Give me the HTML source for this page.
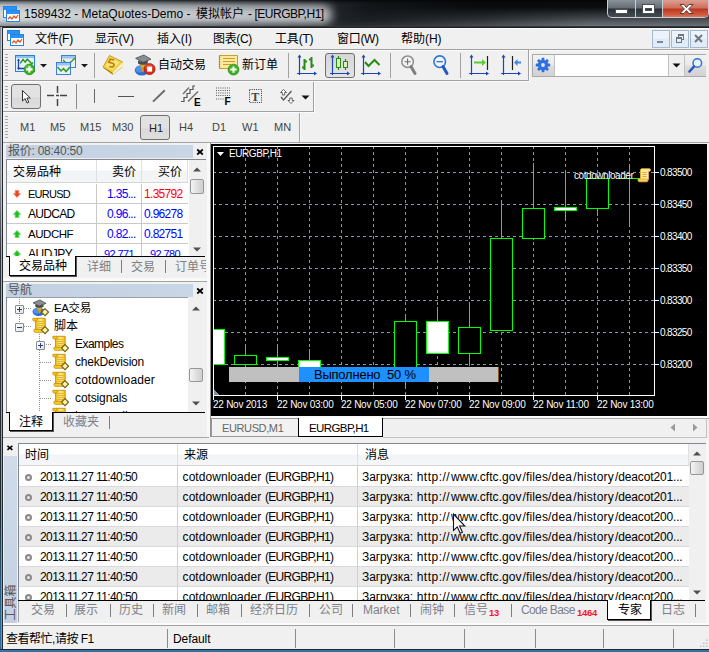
<!DOCTYPE html>
<html lang="zh"><head>
<meta charset="utf-8">
<title>1589432 - MetaQuotes-Demo</title>
<style>
html,body{margin:0;padding:0;}
body{width:709px;height:652px;overflow:hidden;position:relative;background:#f0f0f0;
 font-family:"Liberation Sans","Noto Sans CJK SC",sans-serif;font-size:12px;color:#000;}
.a{position:absolute;}
.t{position:absolute;white-space:nowrap;line-height:16px;height:16px;}
.cj{font-family:"Liberation Sans","Noto Sans CJK SC",sans-serif;}
/* title bar */
#title{left:0;top:0;width:709px;height:28px;background:linear-gradient(90deg,#8e959c 0px,#767d85 60px,#50575e 180px,#2c3137 300px,#12161a 370px,#080a0c 480px,#0b0d10 709px);}
#titleshade{left:0;top:0;width:709px;height:27px;background:linear-gradient(180deg,rgba(0,0,0,.7) 0px,rgba(0,0,0,.25) 2px,rgba(0,0,0,0) 5px,rgba(0,0,0,0) 20px,rgba(60,66,72,.35) 27px);}
#menubar{left:3px;top:29px;width:706px;height:20px;background:#f0f0f0;}
.menu{top:31px;font-size:12px;}
.tb{background:#f0f0f0;}
.sep{position:absolute;width:1px;background:#a0a0a0;}
.grip{position:absolute;margin-left:-4px;width:3px;background-image:repeating-linear-gradient(180deg,#a8a8a8 0,#a8a8a8 1px,transparent 1px,transparent 3px);}
.tf{top:119px;font-size:11px;color:#444;}
.phead{background:linear-gradient(90deg,#c2d0e1,#c9d6e6);}
.ptitle{font-size:12px;color:#555;}
.x{font-weight:bold;font-size:11px;color:#000;}
.cell{font-size:12px;}
.blue{color:#0000ff;}
.red{color:#ff0000;}
.tabtxt{color:#7c8088;font-size:12px;}
.row{position:absolute;left:19px;width:669px;height:19px;border-bottom:1px solid #dadada;}
.row.g{background:#ebebeb;}
.rt{position:absolute;top:2px;white-space:nowrap;line-height:16px;font-size:12px;}
</style>
</head>
<body>
<svg width="0" height="0" style="position:absolute"><defs><linearGradient id="sg" x1="0" x2="1" y1="0" y2="0"><stop offset="0" stop-color="#f3bb10"></stop><stop offset=".5" stop-color="#fdec94"></stop><stop offset="1" stop-color="#f3bb10"></stop></linearGradient></defs></svg>
<!-- ===== window frame ===== -->
<div class="a" id="title"></div>
<div class="a" style="left:-20px;top:5px;width:352px;height:20px;background:#f0f3f6;opacity:.74;filter:blur(5px);border-radius:9px;"></div>
<div class="a" id="titleshade"></div>
<div class="a" style="left:330px;top:0;width:379px;height:27px;background:linear-gradient(180deg,rgba(0,0,0,0) 0,rgba(0,0,0,0) 7px,rgba(112,120,126,.92) 26px);-webkit-mask-image:linear-gradient(90deg,transparent 0,#000 260px);mask-image:linear-gradient(90deg,transparent 0,#000 260px);"></div>
<div class="a" style="left:0;top:26px;width:709px;height:2px;background:linear-gradient(180deg,#3a3f44,#15181b);"></div>
<div class="a" style="left:3px;top:28px;width:706px;height:1px;background:#fafafa;"></div>
<div class="a" style="left:0;top:27px;width:1px;height:625px;background:linear-gradient(180deg,#8a9099 0,#8a9099 150px,#2d343b 230px,#1e2932 480px,#2a5f8a 560px,#2c6e9e 625px);"></div><div class="a" style="left:1px;top:27px;width:1px;height:625px;background:linear-gradient(180deg,#c4c9ce 0,#c0c6cc 150px,#a4adb6 230px,#8d9aa8 480px,#6d9cc0 560px,#5f9ccb 625px);"></div><div class="a" style="left:2px;top:27px;width:1px;height:625px;background:#23272b;"></div>
<div class="a" style="left:0;top:649px;width:709px;height:3px;background:linear-gradient(180deg,#1d2a36 0,#1d2a36 1px,#3a7aa8 1px,#2d6c9c 3px);"></div>
<div class="a" style="left:3px;top:648px;width:706px;height:1px;background:#f0f0f0;"></div>

<!-- title text -->
<div class="t" style="left: 24px; top: 6px; font-size: 12px; color: rgb(0, 0, 0); letter-spacing: 0.02px;">1589432 - MetaQuotes-Demo -</div><div class="t" style="left:196px;top:6px;font-size:12px;color:#000;">模拟帐户</div><div class="t" style="left: 248px; top: 6px; font-size: 12px; color: rgb(0, 0, 0); letter-spacing: -0.47px;">- [EURGBP,H1]</div>

<!-- app icon in title -->
<svg class="a" style="left:3px;top:6px" width="18" height="17" viewBox="0 0 18 17">
 <rect x="0.5" y="0.5" width="13" height="11" fill="#fff" stroke="#1e86ea"></rect><rect x="1" y="1" width="12" height="3" fill="#2b92f5"></rect>
 <rect x="3.5" y="4.5" width="13" height="11" fill="#fff" stroke="#1e86ea"></rect><rect x="4" y="5" width="12" height="3" fill="#2b92f5"></rect>
 <polyline points="5,13 7,11 9,13 11,10 13,12 15,9" fill="none" stroke="#e8501c" stroke-width="1.3"></polyline>
</svg>
<!-- window buttons -->
<div class="a" style="left:607px;top:0;width:102px;height:18px;border-radius:0 0 5px 5px;border:1px solid #c9ced4;border-top:none;box-sizing:border-box;background:linear-gradient(180deg,#8a9299 0,#646c74 8px,#2a3036 9px,#454d55 17px);overflow:hidden;">
 <div class="a" style="left:27px;top:0;width:1px;height:18px;background:#c9ced4;"></div>
 <div class="a" style="left:54px;top:0;width:1px;height:18px;background:#c9ced4;"></div>
 <div class="a" style="left:55px;top:0;width:47px;height:18px;background:linear-gradient(180deg,#dc9f92 0,#cf6f5c 8px,#bc3820 9px,#d0563c 14px,#d8765c 17px);"></div>
 <div class="a" style="left:8px;top:10px;width:11px;height:3px;background:#fff;box-shadow:0 0 0 1px #4a4f55;"></div>
 <div class="a" style="left:35px;top:5px;width:7px;height:3px;border:2px solid #fff;border-top-width:3px;box-shadow:0 0 0 1px #4a4f55,inset 0 0 0 1px #4a4f55;"></div>
 <svg class="a" style="left:70px;top:3px" width="17" height="12" viewBox="0 0 17 12"><path d="M2 1.500h4l2.500 3 2.500-3h4l-4.400 4.500 4.400 4.500h-4l-2.500-3-2.500 3h-4l4.400-4.500z" fill="#fff" stroke="#5a3a36" stroke-width="1"></path></svg>
</div>
<div class="a" id="menubar"></div>
<div class="a" style="left:3px;top:49px;width:706px;height:1px;background:#a2a2a2;"></div><div class="a" style="left:3px;top:50px;width:706px;height:1px;background:#fbfbfb;"></div>
<svg class="a" style="left:7px;top:29px" width="18" height="18" viewBox="0 0 18 18">
 <rect x="0.5" y="1.5" width="12" height="10" fill="#fff" stroke="#1e86ea"></rect><rect x="1" y="2" width="11" height="3" fill="#2b92f5"></rect>
 <rect x="3.5" y="5.5" width="13" height="11" fill="#fff" stroke="#1e86ea"></rect><rect x="4" y="6" width="12" height="3" fill="#2b92f5"></rect>
 <polyline points="5,14 7,12 9,14 11,11 13,13 15,10" fill="none" stroke="#e8501c" stroke-width="1.3"></polyline>
</svg>
<div class="t menu" style="left: 35px; letter-spacing: -0.3px;">文件(F)</div>
<div class="t menu" style="left: 95px; letter-spacing: -0.22px;">显示(V)</div>
<div class="t menu" style="left: 157px; letter-spacing: -0.07px;">插入(I)</div>
<div class="t menu" style="left: 213px; letter-spacing: -0.37px;">图表(C)</div>
<div class="t menu" style="left: 275px; letter-spacing: -0.18px;">工具(T)</div>
<div class="t menu" style="left: 337px; letter-spacing: -0.3px;">窗口(W)</div>
<div class="t menu" style="left: 401px; letter-spacing: -0.04px;">帮助(H)</div>
<!-- mdi buttons -->
<div class="a" style="left:652px;top:30px;width:18px;height:18px;box-sizing:border-box;border:1px solid #a4b8d0;background:linear-gradient(180deg,#edf3fb 0,#edf3fb 7px,#dfeaf7 8px,#e3edf8 16px);"><div class="a" style="left:4px;top:10px;width:6px;height:2px;background:#7d8794;"></div></div>
<div class="a" style="left:671px;top:30px;width:18px;height:18px;box-sizing:border-box;border:1px solid #a4b8d0;background:linear-gradient(180deg,#edf3fb 0,#edf3fb 7px,#dfeaf7 8px,#e3edf8 16px);">
 <div class="a" style="left:6px;top:3px;width:4px;height:3px;border:1px solid #6d7783;border-top-width:2px;"></div>
 <div class="a" style="left:4px;top:6px;width:4px;height:3px;border:1px solid #6d7783;border-top-width:2px;background:#e3eefa;"></div></div>
<div class="a" style="left:690px;top:30px;width:18px;height:18px;box-sizing:border-box;border:1px solid #a4b8d0;background:linear-gradient(180deg,#edf3fb 0,#edf3fb 7px,#dfeaf7 8px,#e3edf8 16px);">
 <svg class="a" style="left:3px;top:3px" width="9" height="9" viewBox="0 0 9 9"><path d="M1 1L8 8M8 1L1 8" stroke="#6d7783" stroke-width="2"></path></svg></div>

<!-- toolbar 1 -->
<div class="a" style="left:3px;top:50px;width:526px;height:31px;border-right:1px solid #a2a2a2;border-bottom:1px solid #a2a2a2;box-sizing:border-box;box-shadow:1px 1px 0 #fbfbfb;"></div>
<div class="grip" style="left:9px;top:54px;height:22px;"></div>
<!-- new chart -->
<svg class="a" style="left:14px;top:54px" width="36" height="22" viewBox="0 0 36 22">
 <rect x="1.500" y="1.500" width="19" height="16" fill="#e6f0fb" stroke="#2b7fe0"></rect><rect x="2" y="2" width="18" height="2" fill="#8fc0f4"></rect>
 <path d="M4.500 5.500v9.500M4 14.500h8" stroke="#1846b8" stroke-width="1.300" fill="none"></path><path d="M4.500 4.500l-1.600 2.200h3.200zM4.500 16l-1.600-2.200h3.200z" fill="#1846b8"></path>
 <polyline points="6.200,9.400 9,5.500 11.200,8 13.300,5.200 17.900,9.800 18.900,8.300" fill="none" stroke="#2f9a1a" stroke-width="1.500"></polyline>
 <circle cx="15.400" cy="15.400" r="5.300" fill="#38b020" stroke="#2a9412" stroke-width=".8"></circle>
 <circle cx="14.600" cy="14.200" r="3.200" fill="#6fd24e" opacity=".55"></circle>
 <path d="M15.400 12.200v6.400M12.200 15.400h6.400" stroke="#fff" stroke-width="2.100"></path>
 <path d="M26 10h7l-3.500 3.600z" fill="#1a1a1a"></path>
</svg>
<!-- profiles -->
<svg class="a" style="left:55px;top:54px" width="36" height="22" viewBox="0 0 36 22">
 <rect x="6.5" y="1.5" width="14" height="12" fill="#e8f1fb" stroke="#3c7fd6"></rect><rect x="7" y="2" width="13" height="2.5" fill="#9cc4f0"></rect>
 <polyline points="8,6 12,10 16,8 20,4" fill="none" stroke="#2f9a1a" stroke-width="1.4"></polyline>
 <rect x="1.5" y="8.5" width="14" height="12" fill="#e8f1fb" stroke="#3c7fd6"></rect><rect x="2" y="9" width="13" height="2.5" fill="#9cc4f0"></rect>
 <polyline points="2.5,13 6,17 8.5,14.5 11,17.5 15,13" fill="none" stroke="#2f9a1a" stroke-width="1.5"></polyline>
 <path d="M26 10h7l-3.5 3.6z" fill="#1a1a1a"></path>
</svg>
<div class="sep" style="left:94px;top:53px;height:25px;"></div>
<!-- market watch book -->
<svg class="a" style="left:102px;top:54px" width="22" height="22" viewBox="0 0 22 22">
 <path d="M1 13L7.500 1.500L20.800 8L20.300 13.400L10.700 20.800L1.500 13.900z" fill="#caa01e"></path>
 <path d="M1 13L7.500 1.500L20.800 8L13.500 15.500L10.300 18.500z" fill="#f2cf3e"></path>
 <path d="M3.200 12.300L8.200 3.600L17.800 8.300L10.300 15.900z" fill="#f9e478"></path>
 <path d="M13.500 15.500L20.800 8L20.500 12.800L11 20.300L10.300 18.500z" fill="#fbf4d2"></path>
 <path d="M1 13L10.300 18.500L11 20.600L1.500 14z" fill="#a8820e"></path>
 <path d="M12.200 6L8.200 5.200L6.800 8.200l4.300 1.300c1.500.8 1.300 3-.6 3.500l-3.200-.4" fill="none" stroke="#c07c10" stroke-width="1.700"></path>
 <path d="M1 13L7.500 1.500L20.800 8" fill="none" stroke="#b8921a" stroke-width=".7"></path>
</svg>
<!-- auto trading -->
<svg class="a" style="left:133px;top:53px" width="24" height="23" viewBox="0 0 24 23">
 <ellipse cx="8.800" cy="17.300" rx="7" ry="5.200" fill="#2a6ad6"></ellipse>
 <ellipse cx="6.400" cy="16.200" rx="3.600" ry="3.400" fill="#5c9af2" opacity=".8"></ellipse>
 <path d="M7 11h6l-1.500 6.500L9.500 20z" fill="#c89a20"></path>
 <ellipse cx="10" cy="10.800" rx="3.400" ry="3.600" fill="#d8aa30"></ellipse>
 <path d="M5 7.500v3c2.400 1.700 7.400 1.700 9.800 0v-3l-4.900 2z" fill="#4a4d51"></path>
 <path d="M2.600 5.300L10.900 2L18 6.200L10 9.400z" fill="#8a8d91" stroke="#3a3c3f" stroke-width=".7"></path>
 <circle cx="16.600" cy="16.100" r="5.500" fill="#d82c1a" stroke="#b01c0e" stroke-width=".8"></circle>
 <ellipse cx="16" cy="14" rx="3.800" ry="2.600" fill="#f06a50" opacity=".55"></ellipse>
 <rect x="14.100" y="13.600" width="5" height="5" fill="#fff"></rect>
</svg>
<div class="t" style="left:158px;top:57px;">自动交易</div>
<!-- new order -->
<svg class="a" style="left:217px;top:54px" width="24" height="22" viewBox="0 0 24 22">
 <rect x="2.5" y="1.5" width="18" height="13" fill="#fbe9a0" stroke="#c9a020"></rect>
 <path d="M2.5 2.5v11" stroke="#a88414" stroke-width="1.4" stroke-dasharray="1.2 1.2"></path>
 <path d="M6 4.5h12M6 7.5h12M6 10.5h8" stroke="#c9a020" stroke-width="1.2"></path>
 <circle cx="16.5" cy="15.6" r="5.4" fill="#3db324" stroke="#2a8f15" stroke-width=".8"></circle>
 <path d="M16.5 12.4v6.4M13.3 15.6h6.4" stroke="#fff" stroke-width="2"></path>
</svg>
<div class="t" style="left:242px;top:57px;">新订单</div>
<div class="sep" style="left:288px;top:53px;height:25px;"></div>
<!-- bars -->
<svg class="a" style="left:295px;top:54px" width="24" height="22" viewBox="0 0 24 22">
 <path d="M4.5 2v19M2 19.5h19" stroke="#1846b8" stroke-width="1.2" fill="none"></path><path d="M4.5 0.5l-2 3h4zM22 19.5l-3-2v4z" fill="#1846b8"></path>
 <path d="M9.5 5v11M7 13.5h2.5M9.5 7.5H12M16.500 3v11M14 5.500h2.500M16.500 11.500H19" stroke="#2a8a12" stroke-width="2" fill="none"></path>
</svg>
<!-- candles pressed -->
<div class="a" style="left:325px;top:53px;width:30px;height:25px;box-sizing:border-box;border:1px solid #6f6f6f;border-radius:3px;background:linear-gradient(180deg,#d6d6d6,#e3e3e3);"></div>
<svg class="a" style="left:328px;top:54px" width="24" height="22" viewBox="0 0 24 22">
 <path d="M4.5 2v19M2 19.5h19" stroke="#1846b8" stroke-width="1.2" fill="none"></path><path d="M4.5 0.5l-2 3h4zM22 19.500l-3-2v4z" fill="#1846b8"></path>
 <path d="M10.500 2v14M17.500 5v11" stroke="#2a8a12" stroke-width="1.2"></path>
 <rect x="8.500" y="4.500" width="4" height="9" fill="#d8f3c8" stroke="#2a8a12"></rect><rect x="15.500" y="7.500" width="4" height="6" fill="#d8f3c8" stroke="#2a8a12"></rect>
</svg>
<!-- line -->
<svg class="a" style="left:359px;top:54px" width="24" height="22" viewBox="0 0 24 22">
 <path d="M4.500 2v19M2 19.500h19" stroke="#1846b8" stroke-width="1.2" fill="none"></path><path d="M4.500 0.500l-2 3h4zM22 19.500l-3-2v4z" fill="#1846b8"></path>
 <polyline points="6,8 9.500,12 15.500,6 20.500,11" fill="none" stroke="#2a8a12" stroke-width="2"></polyline>
</svg>
<div class="sep" style="left:390px;top:53px;height:25px;"></div>
<!-- zoom in -->
<svg class="a" style="left:397px;top:53px" width="24" height="24" viewBox="0 0 24 24">
 <circle cx="10.600" cy="8.700" r="5.800" fill="#f4f4f4" stroke="#8c8c8c" stroke-width="1.500"></circle>
 <path d="M7.500 8.700h6.200M10.600 5.600v6.200" stroke="#6e6e6e" stroke-width="1.100"></path>
 <path d="M14 13.500l4 7" stroke="#7e7e7e" stroke-width="3" stroke-linecap="round"></path>
</svg>
<!-- zoom out -->
<svg class="a" style="left:429px;top:53px" width="24" height="24" viewBox="0 0 24 24">
 <circle cx="10.700" cy="8.700" r="5.800" fill="#eef4fc" stroke="#2f74d6" stroke-width="1.600"></circle>
 <path d="M7.500 8.700h6.400" stroke="#2a62c8" stroke-width="1.200"></path>
 <path d="M14 13.500l4 7" stroke="#2458c0" stroke-width="3" stroke-linecap="round"></path>
</svg>
<div class="sep" style="left:460px;top:53px;height:25px;"></div>
<!-- autoscroll -->
<svg class="a" style="left:467px;top:54px" width="24" height="22" viewBox="0 0 24 22">
 <path d="M4.500 2v19M2 19.500h19" stroke="#1846b8" stroke-width="1.200" fill="none"></path><path d="M4.500 0.500l-2 3h4zM22 19.500l-3-2v4z" fill="#1846b8"></path>
 <path d="M7 7.500h8v-2.500l4 3.500-4 3.500v-2.500h-8z" fill="#5cc83a"></path>
 <path d="M20.500 2v14" stroke="#222" stroke-width="1.200"></path>
</svg>
<!-- chart shift -->
<svg class="a" style="left:499px;top:54px" width="24" height="22" viewBox="0 0 24 22">
 <path d="M4.500 2v19M2 19.500h19" stroke="#1846b8" stroke-width="1.200" fill="none"></path><path d="M4.500 0.500l-2 3h4zM22 19.500l-3-2v4z" fill="#1846b8"></path>
 <path d="M13.500 2v14" stroke="#222" stroke-width="1.200"></path>
 <path d="M22 7.500h-3.500v-2.500l-3.500 3.500 3.500 3.500v-2.500h3.500z" fill="#3d86e8"></path>
</svg>
<!-- search toolbar -->
<div class="a" style="left:532px;top:54px;width:174px;height:23px;box-sizing:border-box;border:1px solid #a9a9a9;background:#fff;"></div>
<div class="a" style="left:533px;top:55px;width:21px;height:21px;background:linear-gradient(180deg,#f2f2f2 0,#ebebeb 10px,#dddddd 11px,#d2d2d2 21px);border-right:1px solid #c2c2c2;"></div>
<svg class="a" style="left:535px;top:57px" width="16" height="16" viewBox="0 0 16 16">
 <g fill="#2f6fe0"><circle cx="8" cy="8" r="5.200"></circle><g transform="rotate(0 8 8)"><rect x="6.600" y="0.800" width="2.800" height="3" rx=".6"></rect><rect x="6.600" y="12.200" width="2.800" height="3" rx=".6"></rect></g><g transform="rotate(45 8 8)"><rect x="6.600" y="0.800" width="2.800" height="3" rx=".6"></rect><rect x="6.600" y="12.200" width="2.800" height="3" rx=".6"></rect></g><g transform="rotate(90 8 8)"><rect x="6.600" y="0.800" width="2.800" height="3" rx=".6"></rect><rect x="6.600" y="12.200" width="2.800" height="3" rx=".6"></rect></g><g transform="rotate(135 8 8)"><rect x="6.600" y="0.800" width="2.800" height="3" rx=".6"></rect><rect x="6.600" y="12.200" width="2.800" height="3" rx=".6"></rect></g></g>
 <circle cx="8" cy="8" r="1.900" fill="#e8e8e8"></circle>
</svg>
<div class="a" style="left:668px;top:55px;width:1px;height:21px;background:#c2c2c2;"></div>
<div class="a" style="left:669px;top:55px;width:15px;height:21px;background:#f0f0f0;"></div>
<svg class="a" style="left:672px;top:63px" width="9" height="5" viewBox="0 0 9 5"><path d="M0.500 0.500h8l-4 4z" fill="#111"></path></svg>
<div class="a" style="left:684px;top:55px;width:21px;height:21px;background:linear-gradient(180deg,#f2f2f2 0,#ebebeb 10px,#dddddd 11px,#d2d2d2 21px);border-left:1px solid #c2c2c2;"></div>
<svg class="a" style="left:687px;top:57px" width="17" height="17" viewBox="0 0 17 17">
 <circle cx="10.300" cy="6" r="4.300" fill="#eaf2fc" stroke="#2f74d6" stroke-width="1.500"></circle>
 <path d="M7 9.500l-4.500 5" stroke="#2458c0" stroke-width="2.600" stroke-linecap="round"></path>
</svg>

<!-- toolbar 2 -->
<div class="a" style="left:3px;top:82px;width:311px;height:30px;box-sizing:border-box;border-right:1px solid #a2a2a2;border-bottom:1px solid #a2a2a2;box-shadow:1px 1px 0 #fbfbfb;"></div>
<div class="grip" style="left:9px;top:86px;height:22px;"></div>
<div class="a" style="left:11px;top:84px;width:30px;height:25px;box-sizing:border-box;border:1px solid #6f6f6f;border-radius:3px;background:linear-gradient(180deg,#e2e2e2 0,#e2e2e2 12px,#d9d9d9 13px,#e0e0e0 25px);"></div>
<svg class="a" style="left:20px;top:89px" width="12" height="16" viewBox="0 0 12 16">
 <path d="M2.500 1.500v10.500l2.600-2.400 1.900 4.400 1.800-.8-1.900-4.200h3.400z" fill="#fff" stroke="#333" stroke-width="1"></path>
</svg>
<svg class="a" style="left:46px;top:85px" width="22" height="22" viewBox="0 0 22 22">
 <path d="M1 10.500h7M14 10.500h7M11.500 1v7M11.500 14v7M10 10.500h3" stroke="#444" stroke-width="1.500"></path>
</svg>
<div class="sep" style="left:76px;top:84px;height:25px;background:#8c8c8c;"></div>
<div class="a" style="left:94px;top:89px;width:1px;height:14px;background:#666;"></div>
<div class="a" style="left:118px;top:96px;width:16px;height:1px;background:#555;"></div>
<svg class="a" style="left:151px;top:88px" width="16" height="16" viewBox="0 0 16 16"><path d="M2 13.600L13.800 2.200" stroke="#6a6a6a" stroke-width="1.900"></path></svg>
<!-- channel E -->
<svg class="a" style="left:180px;top:85px" width="23" height="22" viewBox="0 0 23 22">
 <path d="M3 9L9 2.500M8 16.500L18 6.500" stroke="#777" stroke-width="1.600"></path>
 <path d="M1 16.500h3v-4h3v-4h3v-4h3V1h2" fill="none" stroke="#555" stroke-width="1.200"></path>
 <text x="14" y="20.500" font-family="Liberation Sans,sans-serif" font-weight="bold" font-size="10" fill="#000">E</text>
</svg>
<!-- fibo F -->
<svg class="a" style="left:215px;top:86px" width="18" height="20" viewBox="0 0 18 20">
 <path d="M1 2h14M1 4.500h14M1 7h14M1 9.500h14M1 13h8" stroke="#555" stroke-width="1" stroke-dasharray="1 1.200"></path>
 <text x="9.500" y="19" font-family="Liberation Sans,sans-serif" font-weight="bold" font-size="10" fill="#000">F</text>
</svg>
<!-- text T -->
<svg class="a" style="left:248px;top:88px" width="16" height="16" viewBox="0 0 16 16">
 <rect x="1.500" y="1.500" width="12" height="13" fill="none" stroke="#333" stroke-width="1" stroke-dasharray="1 1.200"></rect>
 <text x="3.200" y="12.500" font-family="Liberation Serif,serif" font-weight="bold" font-size="12" fill="#444">T</text>
</svg>
<!-- arrows -->
<svg class="a" style="left:279px;top:88px" width="17" height="17" viewBox="0 0 17 17">
 <path d="M4.500 1.500l3 3h-1.800v2.500h-2.400v-2.500h-1.800z" fill="#fff" stroke="#555" stroke-width=".9"></path>
 <path d="M12 15.500l3-3h-1.800v-2.500h-2.400v2.500h-1.800z" fill="#fff" stroke="#555" stroke-width=".9"></path>
 <path d="M2 9l2.500 3L12.500 3" fill="none" stroke="#555" stroke-width="1.300"></path>
</svg>
<svg class="a" style="left:301px;top:95px" width="9" height="5" viewBox="0 0 9 5"><path d="M0.500 0.500h8l-4 4z" fill="#111"></path></svg>

<!-- toolbar 3 timeframes -->
<div class="a" style="left:3px;top:113px;width:297px;height:29px;box-sizing:border-box;border-right:1px solid #a2a2a2;box-shadow:1px 0 0 #fbfbfb;"></div>
<div class="a" style="left:3px;top:142px;width:706px;height:1px;background:#a3a3a3;"></div>
<div class="grip" style="left:9px;top:116px;height:22px;"></div>
<div class="a" style="left:140px;top:115px;width:30px;height:25px;box-sizing:border-box;border:1px solid #6f6f6f;border-radius:3px;background:linear-gradient(180deg,#e2e2e2 0,#e2e2e2 12px,#d9d9d9 13px,#e0e0e0 25px);"></div>
<div class="t tf" style="left:20px;">M1</div>
<div class="t tf" style="left:50px;">M5</div>
<div class="t tf" style="left:80px;">M15</div>
<div class="t tf" style="left:112px;">M30</div>
<div class="t tf" style="left:149px;top:120px;color:#222;">H1</div>
<div class="t tf" style="left:179px;">H4</div>
<div class="t tf" style="left:212px;">D1</div>
<div class="t tf" style="left:242px;">W1</div>
<div class="t tf" style="left:274px;">MN</div>

<!-- market watch -->
<div class="a" style="left:5px;top:143px;width:204px;height:136px;background:#f0f0f0;"></div>
<div class="a phead" style="left:6px;top:145px;width:187px;height:13px;"></div>
<div class="t ptitle" style="left: 8px; top: 143px; letter-spacing: -0.25px;">报价: 08:40:50</div>
<svg class="a" style="left:196px;top:148px" width="8" height="8" viewBox="0 0 8 8"><path d="M1.200 1.500L6.800 6.500M6.800 1.500L1.200 6.500" stroke="#000" stroke-width="1.700"></path></svg>
<div class="a" style="left:6px;top:159px;width:200px;height:98px;background:#fff;border-top:1px solid #828790;border-left:1px solid #828790;box-sizing:border-box;overflow:hidden;">
 <div class="a" style="left:0;top:0;width:181px;height:22px;background:linear-gradient(180deg,#fff 0,#fff 10px,#f2f3f5 11px,#f4f5f7 22px);border-bottom:1px solid #d5d5d5;"></div>
 <div class="a" style="left:89px;top:0;width:1px;height:22px;background:#dedfe1;"></div>
 <div class="a" style="left:134px;top:0;width:1px;height:22px;background:#dedfe1;"></div>
 <div class="a" style="left:180px;top:0;width:1px;height:22px;background:#dedfe1;"></div>
 <div class="t cell" style="left:6px;top:4px;">交易品种</div>
 <div class="t cell" style="left:105px;top:4px;">卖价</div>
 <div class="t cell" style="left:151px;top:4px;">买价</div>
 <div class="a" style="left:89px;top:24px;width:1px;height:80px;background:#c8c8c8;"></div>
 <div class="a" style="left:134px;top:24px;width:1px;height:80px;background:#c8c8c8;"></div>
 <div class="a" style="left:0;top:43px;width:181px;height:1px;background:#c8c8c8;"></div>
 <div class="a" style="left:0;top:63px;width:181px;height:1px;background:#c8c8c8;"></div>
 <div class="a" style="left:0;top:83px;width:181px;height:1px;background:#c8c8c8;"></div>
 <svg class="a" style="left:6px;top:30px" width="8" height="8" viewBox="0 0 8 8"><path d="M4 7.600L7.600 3.600H5.800V0.400H2.200V3.600H0.400z" fill="#ee4422" stroke="#f58a70" stroke-width=".8"></path></svg> <svg class="a" style="left:6px;top:50px" width="8" height="8" viewBox="0 0 8 8"><path d="M4 0.400L7.600 4.400H5.800V7.600H2.200V4.400H0.400z" fill="#1fbf1f" stroke="#5fd85f" stroke-width=".8"></path></svg> <svg class="a" style="left:6px;top:70px" width="8" height="8" viewBox="0 0 8 8"><path d="M4 0.400L7.600 4.400H5.800V7.600H2.200V4.400H0.400z" fill="#1fbf1f" stroke="#5fd85f" stroke-width=".8"></path></svg> <svg class="a" style="left:6px;top:90px" width="8" height="8" viewBox="0 0 8 8"><path d="M4 0.400L7.600 4.400H5.800V7.600H2.200V4.400H0.400z" fill="#1fbf1f" stroke="#5fd85f" stroke-width=".8"></path></svg>
 <div class="t cell" style="left: 21px; top: 26px; letter-spacing: -0.76px; font-size: 11px;">EURUSD</div><div class="t cell blue" style="left: 100px; top: 26px; letter-spacing: -0.67px;">1.35...</div><div class="t cell red" style="left: 137px; top: 26px; letter-spacing: -0.69px;">1.35792</div>
 <div class="t cell" style="left: 21px; top: 46px; letter-spacing: -0.7px;">AUDCAD</div><div class="t cell blue" style="left: 100px; top: 46px; letter-spacing: -0.67px;">0.96...</div><div class="t cell blue" style="left: 137px; top: 46px; letter-spacing: -0.69px;">0.96278</div>
 <div class="t cell" style="left: 21px; top: 66px; letter-spacing: -0.46px; font-size: 11.5px;">AUDCHF</div><div class="t cell blue" style="left: 100px; top: 66px; letter-spacing: -0.67px;">0.82...</div><div class="t cell blue" style="left: 137px; top: 66px; letter-spacing: -0.69px;">0.82751</div>
 <div class="t cell" style="left: 21px; top: 86px; letter-spacing: -0.5px;">AUDJPY</div><div class="t cell blue" style="left: 97px; top: 86px; letter-spacing: -0.61px; font-size: 11px;">92.771</div><div class="t cell blue" style="left: 143px; top: 86px; letter-spacing: -0.61px; font-size: 11px;">92.780</div>
 <!-- scrollbar -->
 <div class="a" style="left:182px;top:0;width:18px;height:98px;background:#f0f0f0;"></div>
 <svg class="a" style="left:186px;top:7px" width="8" height="5" viewBox="0 0 8 5"><path d="M0 4.500L4 0.500L8 4.500z" fill="#505050"></path></svg>
 <div class="a" style="left:183px;top:19px;width:14px;height:15px;box-sizing:border-box;border:1px solid #979797;border-radius:2px;background:linear-gradient(90deg,#f5f5f5,#dcdcdc 60%,#cfcfcf);"></div>
 <svg class="a" style="left:186px;top:87px" width="8" height="5" viewBox="0 0 8 5"><path d="M0 0.500L4 4.500L8 0.500z" fill="#505050"></path></svg>
</div>
<!-- mw tabs -->
<div class="a" style="left:6px;top:256px;width:199px;height:1px;background:#000;"></div>
<div class="a" style="left:9px;top:256px;width:67px;height:20px;box-sizing:border-box;background:#fff;border:1px solid #000;border-top:none;box-shadow:1px 1px 0 #555;"></div>
<div class="t" style="left:19px;top:258px;">交易品种</div>
<div class="a" style="left:6px;top:257px;width:200px;height:20px;overflow:hidden;">
 <div class="t tabtxt" style="left:81px;top:2px;">详细</div><div class="a" style="left:115px;top:3px;width:1px;height:13px;background:#7d7d7d;"></div>
 <div class="t tabtxt" style="left:125px;top:2px;">交易</div><div class="a" style="left:159px;top:3px;width:1px;height:13px;background:#7d7d7d;"></div>
 <div class="t tabtxt" style="left:169px;top:2px;">订单号</div>
</div>

<!-- navigator -->
<div class="a" style="left:3px;top:278px;width:204px;height:3px;background:#f9f9f9;"></div><div class="a" style="left:3px;top:281px;width:204px;height:1px;background:#a3a3a3;"></div>
<div class="a phead" style="left:6px;top:284px;width:187px;height:13px;"></div>
<div class="t ptitle" style="left:8px;top:282px;">导航</div>
<svg class="a" style="left:196px;top:287px" width="8" height="8" viewBox="0 0 8 8"><path d="M1.200 1.500L6.800 6.500M6.800 1.500L1.200 6.500" stroke="#000" stroke-width="1.700"></path></svg>
<div class="a" style="left:6px;top:297px;width:200px;height:115px;background:#fff;border-left:1px solid #828790;box-sizing:border-box;overflow:hidden;box-shadow:inset 0 1px 0 #9a9ea6;">
<div class="a" style="left:12px;top:0px;width:1px;height:26px;background-image:repeating-linear-gradient(180deg,#909090 0,#909090 1px,transparent 1px,transparent 2px);"></div><div class="a" style="left:17px;top:11px;width:8px;height:1px;background-image:repeating-linear-gradient(90deg,#909090 0,#909090 1px,transparent 1px,transparent 2px);"></div><div class="a" style="left:17px;top:29px;width:8px;height:1px;background-image:repeating-linear-gradient(90deg,#909090 0,#909090 1px,transparent 1px,transparent 2px);"></div><div class="a" style="left:32px;top:37px;width:1px;height:80px;background-image:repeating-linear-gradient(180deg,#909090 0,#909090 1px,transparent 1px,transparent 2px);"></div><div class="a" style="left:37px;top:47px;width:8px;height:1px;background-image:repeating-linear-gradient(90deg,#909090 0,#909090 1px,transparent 1px,transparent 2px);"></div><div class="a" style="left:33px;top:65px;width:12px;height:1px;background-image:repeating-linear-gradient(90deg,#909090 0,#909090 1px,transparent 1px,transparent 2px);"></div><div class="a" style="left:33px;top:83px;width:12px;height:1px;background-image:repeating-linear-gradient(90deg,#909090 0,#909090 1px,transparent 1px,transparent 2px);"></div><div class="a" style="left:33px;top:101px;width:12px;height:1px;background-image:repeating-linear-gradient(90deg,#909090 0,#909090 1px,transparent 1px,transparent 2px);"></div><div class="a" style="left:8px;top:8px;width:9px;height:9px;box-sizing:border-box;border:1px solid #8b8b8b;border-radius:1px;background:linear-gradient(135deg,#fff,#e4e4e4);"></div><div class="a" style="left:10px;top:12px;width:5px;height:1px;background:#2a3f8f;"></div><div class="a" style="left:12px;top:10px;width:1px;height:5px;background:#2a3f8f;"></div><div class="a" style="left:8px;top:26px;width:9px;height:9px;box-sizing:border-box;border:1px solid #8b8b8b;border-radius:1px;background:linear-gradient(135deg,#fff,#e4e4e4);"></div><div class="a" style="left:10px;top:30px;width:5px;height:1px;background:#2a3f8f;"></div><div class="a" style="left:29px;top:44px;width:9px;height:9px;box-sizing:border-box;border:1px solid #8b8b8b;border-radius:1px;background:linear-gradient(135deg,#fff,#e4e4e4);"></div><div class="a" style="left:31px;top:48px;width:5px;height:1px;background:#2a3f8f;"></div><div class="a" style="left:33px;top:46px;width:1px;height:5px;background:#2a3f8f;"></div><svg class="a" style="left:24px;top:2px" width="18" height="18" viewBox="0 0 18 18">
 <ellipse cx="7.500" cy="12.800" rx="6" ry="4.200" fill="#2a6ad6"></ellipse>
 <ellipse cx="5.400" cy="12" rx="3" ry="2.800" fill="#5c9af2" opacity=".8"></ellipse>
 <path d="M6 8h5l-1.200 5L8 15z" fill="#c89a20"></path>
 <ellipse cx="8.300" cy="7.800" rx="2.900" ry="3" fill="#d8aa30"></ellipse>
 <path d="M4.300 5.300v2.500c2 1.400 6.200 1.400 8.200 0V5.300L8.400 7z" fill="#4a4d51"></path>
 <path d="M2 3.800L9 1l6 3.400L8.300 7z" fill="#8a8d91" stroke="#3a3c3f" stroke-width=".7"></path>
 <path d="M14 9.600l3.500 3.500L14 16.600l-3.500-3.500z" fill="#fcf2a8" stroke="#6e5e12" stroke-width="1.100"></path>
</svg><svg class="a" style="left:25px;top:20px" width="17" height="18" viewBox="0 0 17 18">
 <path d="M3.600 2.600V12.500h9.600V1.300H4.800z" fill="url(#sg)" stroke="#c58c00" stroke-width=".9"></path>
 <path d="M1 1.300h3.600c.9 0 .9 2.700 0 2.700H1.700C.7 4 .5 1.300 1 1.300z" fill="#f4c21c" stroke="#c58c00" stroke-width=".8"></path>
 <path d="M2.300 12.300h9.200c1 0 1 3 0 3H3.100c-1.300 0-1.600-3-.8-3z" fill="#f7cd2e" stroke="#c58c00" stroke-width=".8"></path>
 <path d="M5.500 4.500h6M5.500 6.500h6M5.500 8.500h6M5.500 10.500h6" stroke="#e3b020" stroke-width=".9"></path>
 <path d="M13 9.600l3.500 3.500L13 16.600l-3.500-3.500z" fill="#fcf2a8" stroke="#6e5e12" stroke-width="1.100"></path>
</svg><svg class="a" style="left:45px;top:38px" width="17" height="18" viewBox="0 0 17 18">
 <path d="M3.600 2.600V12.500h9.600V1.300H4.800z" fill="url(#sg)" stroke="#c58c00" stroke-width=".9"></path>
 <path d="M1 1.300h3.600c.9 0 .9 2.700 0 2.700H1.700C.7 4 .5 1.300 1 1.300z" fill="#f4c21c" stroke="#c58c00" stroke-width=".8"></path>
 <path d="M2.300 12.300h9.200c1 0 1 3 0 3H3.100c-1.300 0-1.600-3-.8-3z" fill="#f7cd2e" stroke="#c58c00" stroke-width=".8"></path>
 <path d="M5.500 4.500h6M5.500 6.500h6M5.500 8.500h6M5.500 10.500h6" stroke="#e3b020" stroke-width=".9"></path>
 <path d="M13 9.600l3.500 3.500L13 16.600l-3.500-3.500z" fill="#fcf2a8" stroke="#6e5e12" stroke-width="1.100"></path>
</svg><svg class="a" style="left:45px;top:56px" width="17" height="18" viewBox="0 0 17 18">
 <path d="M3.600 2.600V12.500h9.600V1.300H4.800z" fill="url(#sg)" stroke="#c58c00" stroke-width=".9"></path>
 <path d="M1 1.300h3.600c.9 0 .9 2.700 0 2.700H1.700C.7 4 .5 1.300 1 1.300z" fill="#f4c21c" stroke="#c58c00" stroke-width=".8"></path>
 <path d="M2.300 12.300h9.200c1 0 1 3 0 3H3.100c-1.300 0-1.600-3-.8-3z" fill="#f7cd2e" stroke="#c58c00" stroke-width=".8"></path>
 <path d="M5.500 4.500h6M5.500 6.500h6M5.500 8.500h6M5.500 10.500h6" stroke="#e3b020" stroke-width=".9"></path>
 <path d="M13 9.600l3.500 3.500L13 16.600l-3.500-3.500z" fill="#fcf2a8" stroke="#6e5e12" stroke-width="1.100"></path>
</svg><svg class="a" style="left:45px;top:74px" width="17" height="18" viewBox="0 0 17 18">
 <path d="M3.600 2.600V12.500h9.600V1.300H4.800z" fill="url(#sg)" stroke="#c58c00" stroke-width=".9"></path>
 <path d="M1 1.300h3.600c.9 0 .9 2.700 0 2.700H1.700C.7 4 .5 1.300 1 1.300z" fill="#f4c21c" stroke="#c58c00" stroke-width=".8"></path>
 <path d="M2.300 12.300h9.200c1 0 1 3 0 3H3.100c-1.300 0-1.600-3-.8-3z" fill="#f7cd2e" stroke="#c58c00" stroke-width=".8"></path>
 <path d="M5.500 4.500h6M5.500 6.500h6M5.500 8.500h6M5.500 10.500h6" stroke="#e3b020" stroke-width=".9"></path>
 <path d="M13 9.600l3.500 3.500L13 16.600l-3.500-3.500z" fill="#fcf2a8" stroke="#6e5e12" stroke-width="1.100"></path>
</svg><svg class="a" style="left:45px;top:92px" width="17" height="18" viewBox="0 0 17 18">
 <path d="M3.600 2.600V12.500h9.600V1.300H4.800z" fill="url(#sg)" stroke="#c58c00" stroke-width=".9"></path>
 <path d="M1 1.300h3.600c.9 0 .9 2.700 0 2.700H1.700C.7 4 .5 1.300 1 1.300z" fill="#f4c21c" stroke="#c58c00" stroke-width=".8"></path>
 <path d="M2.300 12.300h9.200c1 0 1 3 0 3H3.100c-1.300 0-1.600-3-.8-3z" fill="#f7cd2e" stroke="#c58c00" stroke-width=".8"></path>
 <path d="M5.500 4.500h6M5.500 6.500h6M5.500 8.500h6M5.500 10.500h6" stroke="#e3b020" stroke-width=".9"></path>
 <path d="M13 9.600l3.500 3.500L13 16.600l-3.500-3.500z" fill="#fcf2a8" stroke="#6e5e12" stroke-width="1.100"></path>
</svg><svg class="a" style="left:45px;top:110px" width="17" height="18" viewBox="0 0 17 18">
 <path d="M3.600 2.600V12.500h9.600V1.300H4.800z" fill="url(#sg)" stroke="#c58c00" stroke-width=".9"></path>
 <path d="M1 1.300h3.600c.9 0 .9 2.700 0 2.700H1.700C.7 4 .5 1.300 1 1.300z" fill="#f4c21c" stroke="#c58c00" stroke-width=".8"></path>
 <path d="M2.300 12.300h9.200c1 0 1 3 0 3H3.100c-1.300 0-1.600-3-.8-3z" fill="#f7cd2e" stroke="#c58c00" stroke-width=".8"></path>
 <path d="M5.500 4.500h6M5.500 6.500h6M5.500 8.500h6M5.500 10.500h6" stroke="#e3b020" stroke-width=".9"></path>
 <path d="M13 9.600l3.500 3.500L13 16.600l-3.500-3.500z" fill="#fcf2a8" stroke="#6e5e12" stroke-width="1.100"></path>
</svg><div class="t cell" style="left: 47px; top: 3px; letter-spacing: -0.38px; font-size: 11.5px;">EA交易</div><div class="t cell" style="left:47px;top:21px;">脚本</div><div class="t cell" style="left: 68px; top: 39px; letter-spacing: -0.54px;">Examples</div><div class="t cell" style="left: 68px; top: 57px; letter-spacing: -0.19px;">chekDevision</div><div class="t cell" style="left: 68px; top: 75px; letter-spacing: 0.15px;">cotdownloader</div><div class="t cell" style="left: 68px; top: 93px; letter-spacing: -0.11px;">cotsignals</div><div class="t cell" style="left:68px;top:111px;">hourcandle</div>
 <div class="a" style="left:181px;top:0;width:18px;height:115px;background:#f0f0f0;"></div>
 <svg class="a" style="left:185px;top:9px" width="8" height="5" viewBox="0 0 8 5"><path d="M0 4.500L4 0.500L8 4.500z" fill="#505050"></path></svg>
 <div class="a" style="left:182px;top:71px;width:14px;height:14px;box-sizing:border-box;border:1px solid #979797;border-radius:2px;background:linear-gradient(90deg,#f5f5f5,#dcdcdc 60%,#cfcfcf);"></div>
 <svg class="a" style="left:185px;top:104px" width="8" height="5" viewBox="0 0 8 5"><path d="M0 0.500L4 4.500L8 0.500z" fill="#505050"></path></svg>
</div>
<div class="a" style="left:6px;top:412px;width:199px;height:1px;background:#000;"></div>
<div class="a" style="left:9px;top:412px;width:44px;height:19px;box-sizing:border-box;background:#fff;border:1px solid #000;border-top:none;box-shadow:1px 1px 0 #555;"></div>
<div class="t" style="left:19px;top:414px;">注释</div>
<div class="t tabtxt" style="left:63px;top:414px;">收藏夹</div><div class="a" style="left:109px;top:416px;width:1px;height:13px;background:#7d7d7d;"></div>
<!-- splitter -->
<div class="a" style="left:207px;top:143px;width:3px;height:294px;background:#f9f9f9;"></div><div class="a" style="left:210px;top:143px;width:1px;height:294px;background:#8f8f8f;"></div>

<!-- chart -->
<svg class="a" style="left:210px;top:143px" width="499" height="275" viewBox="210 143 499 275" shape-rendering="crispEdges" font-family="Liberation Sans,sans-serif" font-size="11">
<rect x="211" y="144" width="496" height="272" fill="#000"></rect>
<g stroke="#8496aa" stroke-width="1" stroke-dasharray="3 3" stroke-dashoffset="1" fill="none">
<path d="M245.5 147V395"></path><path d="M277.5 147V395"></path><path d="M309.5 147V395"></path><path d="M341.5 147V395"></path><path d="M373.5 147V395"></path><path d="M405.5 147V395"></path><path d="M437.5 147V395"></path><path d="M469.5 147V395"></path><path d="M501.5 147V395"></path><path d="M533.5 147V395"></path><path d="M565.5 147V395"></path><path d="M597.5 147V395"></path><path d="M629.5 147V395"></path><path d="M214 172.5H655"></path><path d="M214 204.5H655"></path><path d="M214 236.5H655"></path><path d="M214 268.5H655"></path><path d="M214 300.5H655"></path><path d="M214 332.5H655"></path><path d="M214 364.5H655"></path></g>
<g><rect x="213" y="330" width="11" height="34" fill="#fff" stroke="none"></rect><path d="M213 329.5H224.500V364.500H213" fill="none" stroke="#00ff00"></path><path d="M245.5 345V372" stroke="#00ff00" stroke-width="1"></path><rect x="234.5" y="355.5" width="22" height="9" fill="#000" stroke="#00ff00" stroke-width="1"></rect><path d="M277.5 345V367" stroke="#00ff00" stroke-width="1"></path><rect x="266.5" y="357.5" width="22" height="3" fill="#fff" stroke="#00ff00" stroke-width="1"></rect><path d="M309.5 349V372" stroke="#00ff00" stroke-width="1"></path><rect x="298.5" y="360.5" width="22" height="9" fill="#fff" stroke="#00ff00" stroke-width="1"></rect><path d="M341.5 368V381" stroke="#00ff00" stroke-width="1"></path><rect x="330.5" y="369.5" width="22" height="10" fill="#000" stroke="#00ff00" stroke-width="1"></rect><path d="M373.5 368V388" stroke="#00ff00" stroke-width="1"></path><rect x="362.5" y="369.5" width="22" height="10" fill="#000" stroke="#00ff00" stroke-width="1"></rect><path d="M405.5 316V388" stroke="#00ff00" stroke-width="1"></path><rect x="394.5" y="321.5" width="22" height="54" fill="#000" stroke="#00ff00" stroke-width="1"></rect><path d="M437.5 307V353" stroke="#00ff00" stroke-width="1"></path><rect x="426.5" y="321.5" width="22" height="32" fill="#fff" stroke="#00ff00" stroke-width="1"></rect><path d="M469.5 302V366" stroke="#00ff00" stroke-width="1"></path><rect x="458.5" y="327.5" width="22" height="26" fill="#000" stroke="#00ff00" stroke-width="1"></rect><path d="M501.5 201V330" stroke="#00ff00" stroke-width="1"></path><rect x="490.5" y="238.5" width="22" height="92" fill="#000" stroke="#00ff00" stroke-width="1"></rect><path d="M533.5 163V240" stroke="#00ff00" stroke-width="1"></path><rect x="522.5" y="208.5" width="22" height="30" fill="#000" stroke="#00ff00" stroke-width="1"></rect><path d="M565.5 171V220" stroke="#00ff00" stroke-width="1"></path><rect x="554.5" y="207.5" width="22" height="3" fill="#fff" stroke="#00ff00" stroke-width="1"></rect><path d="M597.5 178V216" stroke="#00ff00" stroke-width="1"></path><rect x="586.5" y="178.5" width="22" height="30" fill="#000" stroke="#00ff00" stroke-width="1"></rect><path d="M629.500 164V227M618 178.500H641" stroke="#00ff00" fill="none"></path></g>
<rect x="229" y="367" width="270" height="15" fill="#c0c0c0"></rect><rect x="299" y="367" width="130" height="15" fill="#1e90ff"></rect><rect x="498" y="367" width="1" height="15" fill="#8a5a00"></rect><path d="M213.500 395.500V146.500H654.500V395.500H213" fill="none" stroke="#fff"></path><path d="M655 172.5H659" stroke="#fff"></path><path d="M655 204.5H659" stroke="#fff"></path><path d="M655 236.5H659" stroke="#fff"></path><path d="M655 268.5H659" stroke="#fff"></path><path d="M655 300.5H659" stroke="#fff"></path><path d="M655 332.5H659" stroke="#fff"></path><path d="M655 364.5H659" stroke="#fff"></path><path d="M277.5 396V400" stroke="#fff"></path><path d="M341.5 396V400" stroke="#fff"></path><path d="M405.5 396V400" stroke="#fff"></path><path d="M469.5 396V400" stroke="#fff"></path><path d="M533.5 396V400" stroke="#fff"></path><path d="M597.5 396V400" stroke="#fff"></path><path d="M214 395V390L219 395z" fill="#7b8fa3"></path><path d="M213.500 396V400" stroke="#fff"></path></svg>
<div class="a" style="left:210px;top:143px;width:496px;height:275px;color:#fff;font-size:10px;letter-spacing:-0.25px;font-family:'Liberation Sans',sans-serif;">
<div class="t" style="left: 450px; top: 23px; line-height: 13px; height: 13px; letter-spacing: -0.64px;">0.83500</div>
<div class="t" style="left: 450px; top: 55px; line-height: 13px; height: 13px; letter-spacing: -0.64px;">0.83450</div>
<div class="t" style="left: 450px; top: 87px; line-height: 13px; height: 13px; letter-spacing: -0.64px;">0.83400</div>
<div class="t" style="left: 450px; top: 119px; line-height: 13px; height: 13px; letter-spacing: -0.64px;">0.83350</div>
<div class="t" style="left: 450px; top: 151px; line-height: 13px; height: 13px; letter-spacing: -0.64px;">0.83300</div>
<div class="t" style="left: 450px; top: 183px; line-height: 13px; height: 13px; letter-spacing: -0.64px;">0.83250</div>
<div class="t" style="left: 450px; top: 215px; line-height: 13px; height: 13px; letter-spacing: -0.64px;">0.83200</div>
<div class="t" style="left:3px;top:255px;line-height:13px;height:13px;">22 Nov 2013</div>
<div class="t" style="left:67px;top:255px;line-height:13px;height:13px;">22 Nov 03:00</div>
<div class="t" style="left:131px;top:255px;line-height:13px;height:13px;">22 Nov 05:00</div>
<div class="t" style="left:195px;top:255px;line-height:13px;height:13px;">22 Nov 07:00</div>
<div class="t" style="left:259px;top:255px;line-height:13px;height:13px;">22 Nov 09:00</div>
<div class="t" style="left:323px;top:255px;line-height:13px;height:13px;">22 Nov 11:00</div>
<div class="t" style="left:387px;top:255px;line-height:13px;height:13px;">22 Nov 13:00</div>
<div class="t" style="left: 19px; top: 4px; line-height: 13px; height: 13px; letter-spacing: -0.43px;">EURGBP,H1</div>
<div class="t" style="left: 364px; top: 26px; line-height: 13px; height: 13px; letter-spacing: -0.44px;">cotdownloader</div>
<div class="t" style="left: 104px; top: 224px; color: rgb(0, 0, 0); font-size: 13px; letter-spacing: -0.23px; line-height: 15px; height: 15px;">Выполнено&nbsp; 50 %</div>
</div>
<svg class="a" style="left:217px;top:152px" width="7" height="4" viewBox="0 0 7 4"><path d="M0 0h7l-3.500 4z" fill="#fff"></path></svg>
<svg class="a" style="left:637px;top:168px" width="15" height="15" viewBox="0 0 15 15">
 <path d="M3.500 2.200c0-1 .6-1.400 1.400-1.400h7.600c1.400 0 1.400 2.600 0 2.600h-1v8.200H3.500z" fill="#fdeeb0" stroke="#e8a828" stroke-width="1"></path>
 <path d="M1.400 11h8.800c.9 0 .9 2.800 0 2.800H2.200C.9 13.800.6 11 1.400 11z" fill="#fbd46a" stroke="#e8a828" stroke-width=".9"></path>
 <path d="M5.300 4.500h4.400M5.300 6.500h4.400M5.300 8.500h4.400" stroke="#e0a838" stroke-width="1"></path>
</svg>
<!-- chart tabs -->
<div class="a" style="left:211px;top:416px;width:498px;height:2px;background:#fbfbfb;"></div><div class="a" style="left:211px;top:418px;width:498px;height:19px;background:#f0f0f0;border-top:1px solid #a8a8a8;box-sizing:border-box;"></div>
<div class="a" style="left:298px;top:418px;width:85px;height:19px;box-sizing:border-box;background:#fff;border:1px solid #000;border-top:none;"></div>
<div class="a" style="left:211px;top:418px;width:87px;height:19px;box-sizing:border-box;border:1px solid #9a9a9a;border-right:none;background:#f2f2f2;"></div>
<div class="a" style="left:3px;top:437px;width:206px;height:1px;background:#a6a6a6;"></div><div class="a" style="left:383px;top:437px;width:324px;height:1px;background:#c4c4c4;"></div><div class="a" style="left:706px;top:418px;width:1px;height:19px;background:#c4c4c4;"></div>

<div class="t" style="left: 222px; top: 420px; color: rgb(102, 102, 102); letter-spacing: -0.38px; font-size: 11px;">EURUSD,M1</div>
<div class="t" style="left: 309px; top: 420px; letter-spacing: -0.59px; font-size: 11.5px;">EURGBP,H1</div>
<svg class="a" style="left:670px;top:423px" width="6" height="9" viewBox="0 0 6 9"><path d="M5 0.500v8L0.500 4.500z" fill="#9a9a9a"></path></svg>
<svg class="a" style="left:692px;top:423px" width="6" height="9" viewBox="0 0 6 9"><path d="M1 0.500v8l4.500-4z" fill="#9a9a9a"></path></svg>

<!-- terminal -->
<div class="a" style="left:4px;top:440px;width:701px;height:185px;background:#f0f0f0;"></div>
<div class="a" style="left:4px;top:456px;width:13px;height:167px;background:linear-gradient(180deg,#d0dcea,#c2d0e1);"></div>
<svg class="a" style="left:6px;top:444px" width="8" height="8" viewBox="0 0 8 8"><path d="M1.400 1.800L6.400 5.800M6.400 1.800L1.400 5.800" stroke="#000" stroke-width="1.600"></path></svg>
<div class="t" style="left:-9px;top:594px;width:40px;height:13px;line-height:13px;font-size:12px;color:#555;transform:rotate(-90deg);transform-origin:center;text-align:left;">工具箱</div>
<div class="a" style="left:18px;top:443px;width:688px;height:157px;background:#fff;border-left:1px solid #828790;border-top:1px solid #828790;box-sizing:border-box;overflow:hidden;">
 <div class="a" style="left:0;top:0;width:670px;height:21px;background:linear-gradient(180deg,#fff 0,#fff 10px,#f3f4f6 11px,#f5f6f8 21px);border-bottom:1px solid #d5d5d5;"></div>
 <div class="a" style="left:158px;top:0;width:1px;height:21px;background:#dedfe1;"></div>
 <div class="a" style="left:338px;top:0;width:1px;height:21px;background:#dedfe1;"></div>
 <div class="a" style="left:669px;top:0;width:1px;height:21px;background:#dedfe1;"></div>
 <div class="t cell" style="left:6px;top:3px;">时间</div>
 <div class="t cell" style="left:165px;top:3px;">来源</div>
 <div class="t cell" style="left:346px;top:3px;">消息</div>
 <div class="row" style="left:0;top:23px;width:670px;"><div class="a" style="left:6px;top:7px;width:3px;height:3px;border:2px solid #8a8a8a;border-radius:50%;background:#e6e6e6;"></div><div class="rt" style="left: 21px; letter-spacing: -0.59px;">2013.11.27 11:40:50</div><div class="rt" style="left: 163.6px; letter-spacing: 0.05px;">cotdownloader</div><div class="rt" style="left: 246px; letter-spacing: -0.69px;">(EURGBP,H1)</div><div class="rt" style="left: 343px; letter-spacing: -0.1px;">Загрузка:</div><div class="rt" style="left: 397.7px; letter-spacing: 0.5px;">http://</div><div class="rt" style="left: 432px; letter-spacing: 0.04px;">www.cftc.gov</div><div class="rt" style="left: 503.5px; letter-spacing: 0.15px;">/files/dea</div><div class="rt" style="left: 554.3px; letter-spacing: 0.27px;">/history</div><div class="rt" style="left: 596px; letter-spacing: -0.14px;">/deacot201...</div></div>
 <div class="row g" style="left:0;top:43px;width:670px;"><div class="a" style="left:6px;top:7px;width:3px;height:3px;border:2px solid #8a8a8a;border-radius:50%;background:#e6e6e6;"></div><div class="rt" style="left: 21px; letter-spacing: -0.59px;">2013.11.27 11:40:50</div><div class="rt" style="left: 163.6px; letter-spacing: 0.05px;">cotdownloader</div><div class="rt" style="left: 246px; letter-spacing: -0.69px;">(EURGBP,H1)</div><div class="rt" style="left: 343px; letter-spacing: -0.1px;">Загрузка:</div><div class="rt" style="left: 397.7px; letter-spacing: 0.5px;">http://</div><div class="rt" style="left: 432px; letter-spacing: 0.04px;">www.cftc.gov</div><div class="rt" style="left: 503.5px; letter-spacing: 0.15px;">/files/dea</div><div class="rt" style="left: 554.3px; letter-spacing: 0.27px;">/history</div><div class="rt" style="left: 596px; letter-spacing: -0.14px;">/deacot201...</div></div>
 <div class="row" style="left:0;top:63px;width:670px;"><div class="a" style="left:6px;top:7px;width:3px;height:3px;border:2px solid #8a8a8a;border-radius:50%;background:#e6e6e6;"></div><div class="rt" style="left: 21px; letter-spacing: -0.59px;">2013.11.27 11:40:50</div><div class="rt" style="left: 163.6px; letter-spacing: 0.05px;">cotdownloader</div><div class="rt" style="left: 246px; letter-spacing: -0.69px;">(EURGBP,H1)</div><div class="rt" style="left: 343px; letter-spacing: -0.1px;">Загрузка:</div><div class="rt" style="left: 397.7px; letter-spacing: 0.5px;">http://</div><div class="rt" style="left: 432px; letter-spacing: 0.04px;">www.cftc.gov</div><div class="rt" style="left: 503.5px; letter-spacing: 0.15px;">/files/dea</div><div class="rt" style="left: 554.3px; letter-spacing: 0.27px;">/history</div><div class="rt" style="left: 596px; letter-spacing: -0.14px;">/deacot200...</div></div>
 <div class="row g" style="left:0;top:83px;width:670px;"><div class="a" style="left:6px;top:7px;width:3px;height:3px;border:2px solid #8a8a8a;border-radius:50%;background:#e6e6e6;"></div><div class="rt" style="left: 21px; letter-spacing: -0.59px;">2013.11.27 11:40:50</div><div class="rt" style="left: 163.6px; letter-spacing: 0.05px;">cotdownloader</div><div class="rt" style="left: 246px; letter-spacing: -0.69px;">(EURGBP,H1)</div><div class="rt" style="left: 343px; letter-spacing: -0.1px;">Загрузка:</div><div class="rt" style="left: 397.7px; letter-spacing: 0.5px;">http://</div><div class="rt" style="left: 432px; letter-spacing: 0.04px;">www.cftc.gov</div><div class="rt" style="left: 503.5px; letter-spacing: 0.15px;">/files/dea</div><div class="rt" style="left: 554.3px; letter-spacing: 0.27px;">/history</div><div class="rt" style="left: 596px; letter-spacing: -0.14px;">/deacot200...</div></div>
 <div class="row" style="left:0;top:103px;width:670px;"><div class="a" style="left:6px;top:7px;width:3px;height:3px;border:2px solid #8a8a8a;border-radius:50%;background:#e6e6e6;"></div><div class="rt" style="left: 21px; letter-spacing: -0.59px;">2013.11.27 11:40:50</div><div class="rt" style="left: 163.6px; letter-spacing: 0.05px;">cotdownloader</div><div class="rt" style="left: 246px; letter-spacing: -0.69px;">(EURGBP,H1)</div><div class="rt" style="left: 343px; letter-spacing: -0.1px;">Загрузка:</div><div class="rt" style="left: 397.7px; letter-spacing: 0.5px;">http://</div><div class="rt" style="left: 432px; letter-spacing: 0.04px;">www.cftc.gov</div><div class="rt" style="left: 503.5px; letter-spacing: 0.15px;">/files/dea</div><div class="rt" style="left: 554.3px; letter-spacing: 0.27px;">/history</div><div class="rt" style="left: 596px; letter-spacing: -0.14px;">/deacot200...</div></div>
 <div class="row g" style="left:0;top:123px;width:670px;"><div class="a" style="left:6px;top:7px;width:3px;height:3px;border:2px solid #8a8a8a;border-radius:50%;background:#e6e6e6;"></div><div class="rt" style="left: 21px; letter-spacing: -0.59px;">2013.11.27 11:40:50</div><div class="rt" style="left: 163.6px; letter-spacing: 0.05px;">cotdownloader</div><div class="rt" style="left: 246px; letter-spacing: -0.69px;">(EURGBP,H1)</div><div class="rt" style="left: 343px; letter-spacing: -0.1px;">Загрузка:</div><div class="rt" style="left: 397.7px; letter-spacing: 0.5px;">http://</div><div class="rt" style="left: 432px; letter-spacing: 0.04px;">www.cftc.gov</div><div class="rt" style="left: 503.5px; letter-spacing: 0.15px;">/files/dea</div><div class="rt" style="left: 554.3px; letter-spacing: 0.27px;">/history</div><div class="rt" style="left: 596px; letter-spacing: -0.14px;">/deacot200...</div></div>
 <div class="row" style="left:0;top:143px;width:670px;"><div class="a" style="left:6px;top:7px;width:3px;height:3px;border:2px solid #8a8a8a;border-radius:50%;background:#e6e6e6;"></div><div class="rt" style="left: 21px; letter-spacing: -0.59px;">2013.11.27 11:40:50</div><div class="rt" style="left: 163.6px; letter-spacing: 0.05px;">cotdownloader</div><div class="rt" style="left: 246px; letter-spacing: -0.69px;">(EURGBP,H1)</div><div class="rt" style="left: 343px; letter-spacing: -0.1px;">Загрузка:</div><div class="rt" style="left: 397.7px; letter-spacing: 0.5px;">http://</div><div class="rt" style="left: 432px; letter-spacing: 0.04px;">www.cftc.gov</div><div class="rt" style="left: 503.5px; letter-spacing: 0.15px;">/files/dea</div><div class="rt" style="left: 554.3px; letter-spacing: 0.27px;">/history</div><div class="rt" style="left: 596px; letter-spacing: -0.14px;">/deacot200...</div></div>
 <div class="a" style="left:158px;top:22px;width:1px;height:140px;background:#d0d0d0;"></div>
 <div class="a" style="left:338px;top:22px;width:1px;height:140px;background:#d0d0d0;"></div>
 <div class="a" style="left:670px;top:0;width:18px;height:157px;background:#f0f0f0;"></div>
 <svg class="a" style="left:674px;top:7px" width="8" height="5" viewBox="0 0 8 5"><path d="M0 4.500L4 0.500L8 4.500z" fill="#505050"></path></svg>
 <div class="a" style="left:671px;top:17px;width:14px;height:14px;box-sizing:border-box;border:1px solid #979797;border-radius:2px;background:linear-gradient(90deg,#f5f5f5,#dcdcdc 60%,#cfcfcf);"></div>
 <svg class="a" style="left:674px;top:146px" width="8" height="5" viewBox="0 0 8 5"><path d="M0 0.500L4 4.500L8 0.500z" fill="#505050"></path></svg>
</div>
<div class="a" style="left:18px;top:600px;width:687px;height:1px;background:#000;"></div><div class="a" style="left:18px;top:601px;width:1px;height:21px;background:#a0a0a0;"></div><div class="a" style="left:706px;top:438px;width:3px;height:185px;background:#f8f8f8;"></div>
<div class="a" style="left:607px;top:600px;width:44px;height:20px;box-sizing:border-box;background:#fff;border:1px solid #000;border-top:none;box-shadow:1px 1px 0 #555;"></div>
<div class="t tabtxt" style="left:31px;top:602px;">交易</div><div class="t tabtxt" style="left:74px;top:602px;">展示</div><div class="t tabtxt" style="left:119px;top:602px;">历史</div><div class="t tabtxt" style="left:162px;top:602px;">新闻</div><div class="t tabtxt" style="left:206px;top:602px;">邮箱</div><div class="t tabtxt" style="left:250px;top:602px;">经济日历</div><div class="t tabtxt" style="left:319px;top:602px;">公司</div><div class="t tabtxt" style="left: 363px; top: 602px; letter-spacing: -0.03px;">Market</div><div class="t tabtxt" style="left:420px;top:602px;">闹钟</div><div class="t tabtxt" style="left:464px;top:602px;">信号</div><div class="t tabtxt" style="left: 521px; top: 602px; letter-spacing: -0.63px;">Code Base</div><div class="t tabtxt" style="left:661px;top:602px;">日志</div><div class="a" style="left:66px;top:604px;width:1px;height:13px;background:#7d7d7d;"></div><div class="a" style="left:110px;top:604px;width:1px;height:13px;background:#7d7d7d;"></div><div class="a" style="left:153px;top:604px;width:1px;height:13px;background:#7d7d7d;"></div><div class="a" style="left:197px;top:604px;width:1px;height:13px;background:#7d7d7d;"></div><div class="a" style="left:241px;top:604px;width:1px;height:13px;background:#7d7d7d;"></div><div class="a" style="left:309px;top:604px;width:1px;height:13px;background:#7d7d7d;"></div><div class="a" style="left:352px;top:604px;width:1px;height:13px;background:#7d7d7d;"></div><div class="a" style="left:410px;top:604px;width:1px;height:13px;background:#7d7d7d;"></div><div class="a" style="left:454px;top:604px;width:1px;height:13px;background:#7d7d7d;"></div><div class="a" style="left:511px;top:604px;width:1px;height:13px;background:#7d7d7d;"></div><div class="a" style="left:695px;top:604px;width:1px;height:13px;background:#7d7d7d;"></div><div class="t" style="left:618px;top:602px;">专家</div><div class="t" style="left:489px;top:605px;font-size:9.5px;font-weight:bold;color:#f5182c;letter-spacing:-0.3px;">13</div><div class="t" style="left:577px;top:605px;font-size:9.5px;font-weight:bold;color:#f5182c;letter-spacing:-0.3px;">1464</div>

<!-- status bar -->
<div class="a" style="left:3px;top:623px;width:706px;height:2px;background:#fbfbfb;"></div><div class="a" style="left:3px;top:625px;width:706px;height:1px;background:#a3a3a3;"></div>
<div class="a" style="left:3px;top:626px;width:706px;height:23px;background:#f0f0f0;"></div>
<div class="t" style="left: 6px; top: 631px; letter-spacing: -0.49px;">查看帮忙,请按 F1</div>
<div class="t" style="left: 173px; top: 631px; letter-spacing: -0.08px;">Default</div>
<div class="a" style="left:167px;top:629px;width:1px;height:19px;background:#8c8c8c;"></div><div class="a" style="left:295px;top:629px;width:1px;height:19px;background:#8c8c8c;"></div><div class="a" style="left:394px;top:629px;width:1px;height:19px;background:#8c8c8c;"></div><div class="a" style="left:464px;top:629px;width:1px;height:19px;background:#8c8c8c;"></div><div class="a" style="left:535px;top:629px;width:1px;height:19px;background:#8c8c8c;"></div><div class="a" style="left:603px;top:629px;width:1px;height:19px;background:#8c8c8c;"></div><div class="a" style="left:673px;top:629px;width:1px;height:19px;background:#8c8c8c;"></div>
<svg class="a" style="left:699px;top:638px" width="10" height="10" viewBox="0 0 10 10"><g fill="#c2c2c2"><rect x="7" y="7.500" width="1.500" height="1.500"></rect><rect x="7" y="4.500" width="1.500" height="1.500"></rect><rect x="4" y="7.500" width="1.500" height="1.500"></rect><rect x="7" y="1.500" width="1.500" height="1.500"></rect><rect x="4" y="4.500" width="1.500" height="1.500"></rect><rect x="1" y="7.500" width="1.500" height="1.500"></rect></g></svg>
<!-- mouse cursor -->
<svg class="a" style="left:452px;top:513px" width="15" height="22" viewBox="0 0 15 22"><path d="M1.500 1v16.500l3.800-3.600 2.800 6.400 2.300-1-2.800-6.300h5.200z" fill="#fff" stroke="#10141c" stroke-width="1.100"></path></svg>



</body></html>
